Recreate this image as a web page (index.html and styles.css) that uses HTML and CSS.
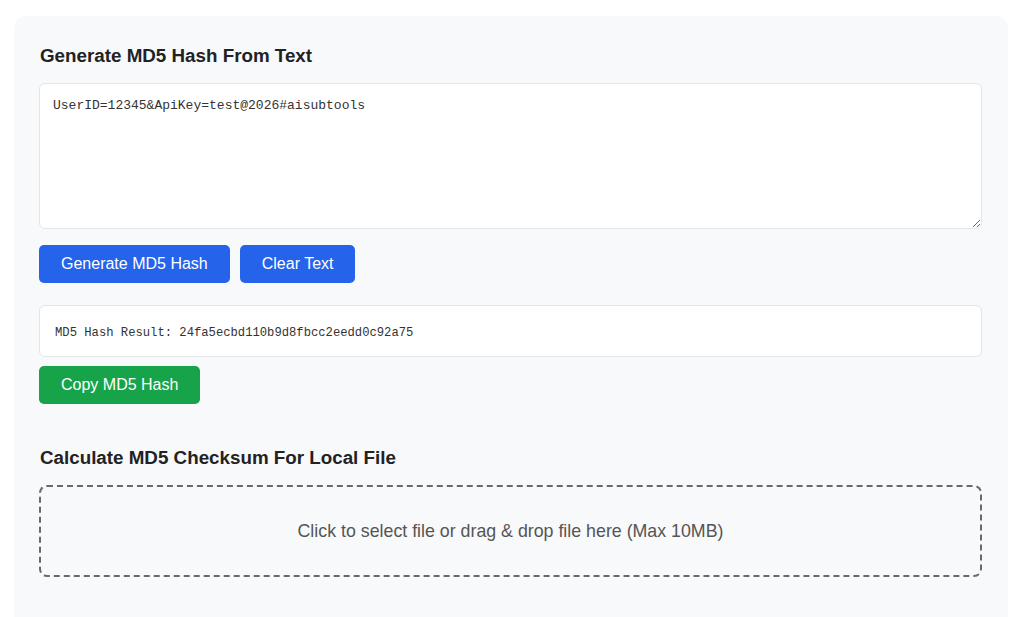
FILE: index.html
```html
<!DOCTYPE html>
<html>
<head>
<meta charset="utf-8">
<link rel="stylesheet" href="styles.css">
</head>
<body>
<main class="card">
  <h2 class="title">Generate MD5 Hash From Text</h2>
  <textarea class="input" spellcheck="false">UserID=12345&amp;ApiKey=test@2026#aisubtools</textarea>
  <div class="actions">
    <button class="btn btn-blue">Generate MD5 Hash</button>
    <button class="btn btn-blue">Clear Text</button>
  </div>
  <div class="result">MD5 Hash Result: 24fa5ecbd110b9d8fbcc2eedd0c92a75</div>
  <button class="btn btn-green copy">Copy MD5 Hash</button>
  <h2 class="title title-file">Calculate MD5 Checksum For Local File</h2>
  <div class="drop">Click to select file or drag &amp; drop file here (Max 10MB)</div>
</main>
</body>
</html>
```

FILE: styles.css
```css
html, body {
  margin: 0;
  background: #ffffff;
}
body {
  padding: 16px 16px 0 14px;
  font-family: "Liberation Sans", Arial, sans-serif;
  height: 617px;
  box-sizing: border-box;
  overflow: hidden;
}
.card {
  background: #f8f9fb;
  border-radius: 12px 12px 0 0;
  padding: 29px 26px 40px 25px;
  min-height: 620px;
  box-sizing: border-box;
}
.title {
  margin: 0 0 17px 1px;
  font-size: 18.8px;
  line-height: 21px;
  font-weight: bold;
  color: #222222;
}
.input {
  display: block;
  width: 100%;
  height: 146px;
  box-sizing: border-box;
  border: 1px solid #e3e5e8;
  border-radius: 6px;
  background: #ffffff;
  padding: 13px 13px 12px;
  font-family: "Liberation Mono", monospace;
  font-size: 13px;
  line-height: 18px;
  color: #333333;
  resize: vertical;
  outline: none;
  margin: 0;
}
.actions {
  display: flex;
  gap: 10px;
  margin-top: 16px;
}
.btn {
  border: none;
  border-radius: 5px;
  color: #ffffff;
  font-family: "Liberation Sans", Arial, sans-serif;
  font-size: 16px;
  line-height: 18px;
  padding: 10px 22px;
  height: 38px;
  cursor: pointer;
}
.btn-blue { background: #2563eb; }
.btn-green { background: #16a34a; }
.result {
  margin-top: 22px;
  background: #ffffff;
  border: 1px solid #e3e5e8;
  border-radius: 6px;
  height: 52px;
  box-sizing: border-box;
  padding: 3px 15px 0;
  display: flex;
  align-items: center;
  font-family: "Liberation Mono", monospace;
  font-size: 12.2px;
  color: #333333;
}
.copy {
  display: block;
  margin-top: 9px;
}
.title-file {
  margin-top: 43px;
}
.drop {
  border: 2px dashed #666a70;
  border-radius: 8px;
  height: 92px;
  box-sizing: border-box;
  display: flex;
  align-items: center;
  justify-content: center;
  font-size: 17.8px;
  color: #555555;
}
```
